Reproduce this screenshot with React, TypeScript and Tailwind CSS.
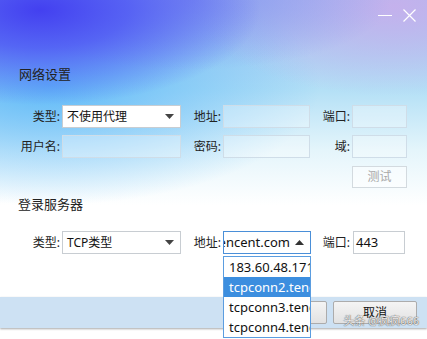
import React from 'react'

const bg =
  "bg-[radial-gradient(ellipse_220px_95px_at_40px_10px,#4340f0_0%,rgba(78,86,244,0.85)_40%,rgba(110,150,245,0)_100%),radial-gradient(ellipse_200px_70px_at_190px_0px,rgba(128,146,240,0.85)_0%,rgba(128,146,240,0)_100%),radial-gradient(ellipse_200px_90px_at_395px_6px,rgba(198,176,236,0.95)_0%,rgba(196,184,236,0)_100%),radial-gradient(ellipse_270px_120px_at_50px_85px,rgba(92,184,248,0.95)_0%,rgba(92,184,248,0)_100%),linear-gradient(180deg,#a3c1f0_0px,#b4e0f6_90px,#e4f5fb_150px,#ffffff_205px)]"

function Caret({ up = false }: { up?: boolean }) {
  return (
    <svg width="9" height="5" viewBox="0 0 9 5" className="shrink-0">
      {up ? <path d="M0 5 L4.5 0 L9 5 Z" fill="#333" /> : <path d="M0 0 L9 0 L4.5 5 Z" fill="#444" />}
    </svg>
  )
}

function Label({ text, w }: { text: string; w: string }) {
  return <div className={`${w} shrink-0 text-right pr-[2px] text-[12px] text-[#222] leading-[23px]`}>{text}</div>
}

function Select({ value }: { value: string }) {
  return (
    <div className="w-[119px] h-[23px] bg-white border border-[#c8cdd2] flex items-center justify-between pl-[4px] pr-[6px] text-[12px] text-[#111]">
      <span>{value}</span>
      <Caret />
    </div>
  )
}

function Blank({ w }: { w: string }) {
  return <div className={`${w} h-[23px] bg-white/30 border border-[#cfdde8]`} />
}

export default function App() {
  const items = ['183.60.48.171', 'tcpconn2.tencent.com', 'tcpconn3.tencent.com', 'tcpconn4.tencent.com']

  return (
    <div
      className={`relative w-[427px] h-[339px] overflow-hidden bg-white flex flex-col font-['Noto_Sans','Noto_Sans_CJK_SC',sans-serif] ${bg}`}
    >
      {/* title bar */}
      <div className="h-[30px] flex justify-end items-start pt-[9px] pr-[11px] gap-[11px]">
        <div className="w-[14px] h-[1px] bg-white mt-[6px]" />
        <svg width="13" height="13" viewBox="0 0 13 13">
          <path d="M0.5 0.5 L12.5 12.5 M12.5 0.5 L0.5 12.5" stroke="white" strokeWidth="1.2" />
        </svg>
      </div>

      <div className="mt-[35px] pl-[19px] h-[18px] leading-[18px] text-[13px] text-[#222]">网络设置</div>

      {/* proxy rows */}
      <div className="mt-[22px] flex items-center">
        <Label text="类型:" w="w-[62px]" />
        <Select value="不使用代理" />
        <Label text="地址:" w="w-[42px]" />
        <Blank w="w-[87px]" />
        <Label text="端口:" w="w-[42px]" />
        <Blank w="w-[55px]" />
      </div>
      <div className="mt-[7px] flex items-center">
        <Label text="用户名:" w="w-[62px]" />
        <Blank w="w-[119px]" />
        <Label text="密码:" w="w-[42px]" />
        <Blank w="w-[87px]" />
        <Label text="域:" w="w-[42px]" />
        <Blank w="w-[55px]" />
      </div>
      <div className="mt-[8px] pl-[352px]">
        <div className="w-[55px] h-[22px] border border-[#d3dadf] bg-white/50 flex items-center justify-center text-[12px] text-[#a8a8a8]">
          测试
        </div>
      </div>

      <div className="mt-[7px] pl-[18px] h-[18px] leading-[18px] text-[13px] text-[#222]">登录服务器</div>

      {/* server row */}
      <div className="mt-[18px] flex items-center">
        <Label text="类型:" w="w-[62px]" />
        <Select value="TCP类型" />
        <Label text="地址:" w="w-[42px]" />
        <div className="relative w-[88px] h-[23px]">
          <div className="w-full h-full bg-white border border-[#4a8fd8] flex items-center pr-[6px]">
            <div className="flex-1 overflow-hidden flex justify-end whitespace-nowrap text-[13px] text-[#111] pr-[5px]">
              tcpconn.tencent.com
            </div>
            <Caret up />
          </div>
          {/* open dropdown list */}
          <div className="absolute left-0 top-[25px] w-[88px] bg-white border border-[#5b9de0] z-10">
            {items.map((it, i) => (
              <div
                key={it}
                className={`h-[20px] leading-[20px] pl-[5px] whitespace-nowrap overflow-hidden text-[13px] ${
                  i === 1 ? 'bg-[#3c8edf] text-white' : 'text-[#111]'
                }`}
              >
                {it}
              </div>
            ))}
          </div>
        </div>
        <Label text="端口:" w="w-[41px]" />
        <div className="ml-[1px] w-[52px] h-[23px] bg-white border border-[#c8cdd2] pl-[2px] text-[13px] leading-[21px] text-[#111]">
          443
        </div>
      </div>

      <div className="flex-1" />

      {/* footer */}
      <div className="relative h-[31px] bg-[#cde1f3] shadow-[0_1px_2px_rgba(0,0,0,0.35)] flex items-center justify-end gap-[6px] pr-[10px]">
        <div className="w-[75px] h-[23px] rounded-[2px] border border-[#acacac] bg-[linear-gradient(#f4f4f4,#e2e2e2)] flex items-center justify-center text-[12px] text-[#111]">
          确定
        </div>
        <div className="w-[84px] h-[23px] rounded-[2px] border border-[#acacac] bg-[linear-gradient(#f4f4f4,#e2e2e2)] flex items-center justify-center text-[12px] text-[#111]">
          取消
        </div>
        <div className="absolute right-[8px] top-[17px] text-[11px] leading-[13px] text-white/90 [text-shadow:0_0_1px_#555,0_0_1px_#555]">
          头条 @疯疯666
        </div>
      </div>
      <div className="h-[11px]" />
    </div>
  )
}
